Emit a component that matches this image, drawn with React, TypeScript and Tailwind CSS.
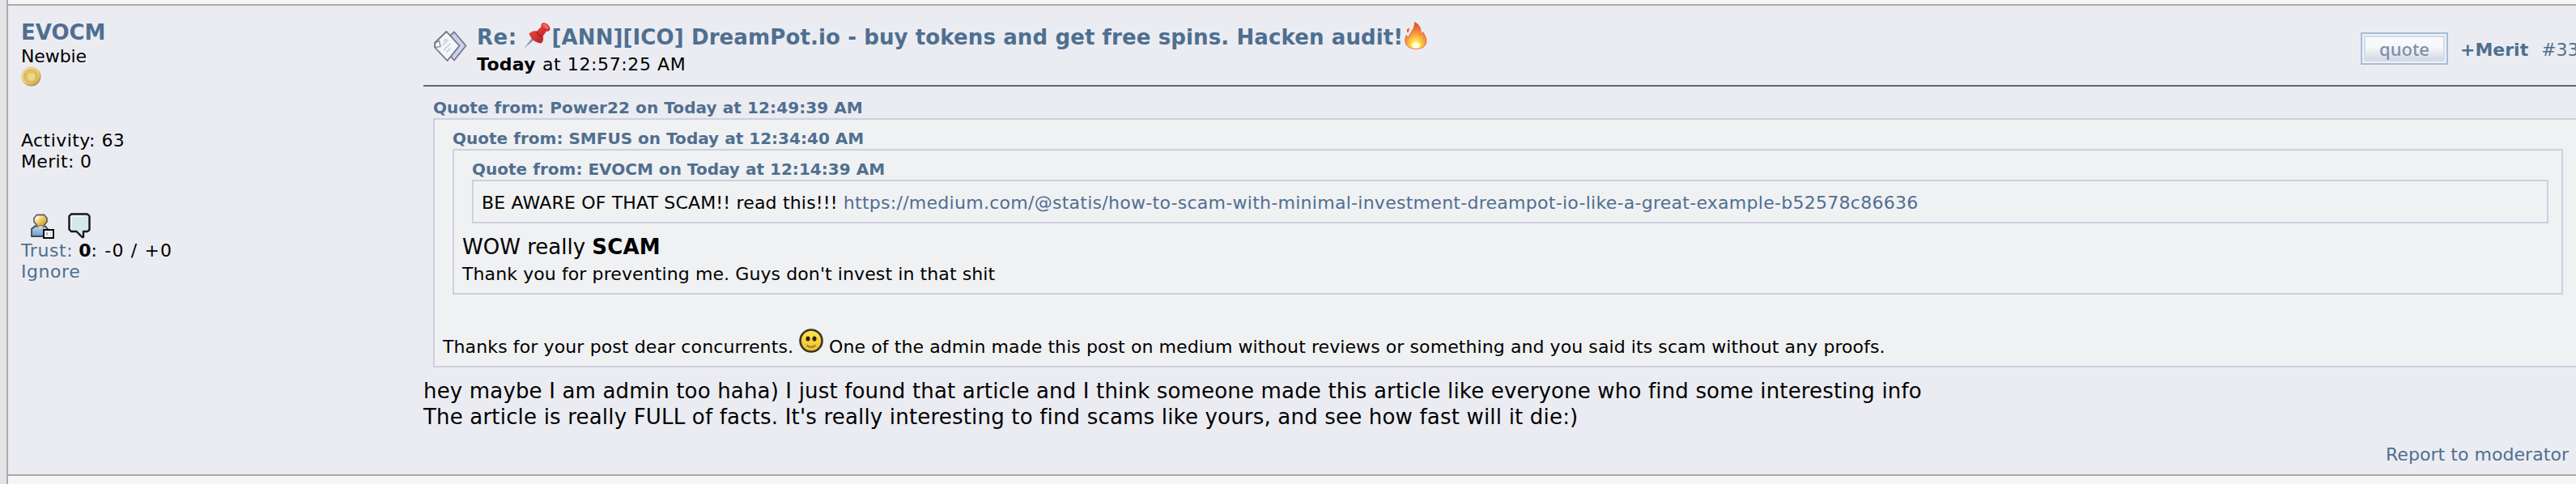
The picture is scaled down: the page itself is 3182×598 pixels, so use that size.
import type { ReactNode } from 'react'

function CoinIcon() {
  return (
    <svg width="25" height="25" viewBox="0 0 25 25" className="-mt-px">
      <defs>
        <radialGradient id="coin" cx="0.4" cy="0.35" r="0.7">
          <stop offset="0" stopColor="#fbeaa4" />
          <stop offset="0.7" stopColor="#e6ca72" />
          <stop offset="1" stopColor="#a5813a" />
        </radialGradient>
      </defs>
      <circle cx="12.5" cy="12.5" r="12" fill="url(#coin)" />
      <circle cx="12" cy="12" r="8" fill="#e2c26a" stroke="#d2ae5a" strokeWidth="1.2" />
      <circle cx="12.5" cy="13" r="4.5" fill="#efd888" />
    </svg>
  )
}

function ProfileIcon() {
  return (
    <svg width="29" height="32" viewBox="0 0 29 32">
      <defs>
        <linearGradient id="face" x1="0" y1="0" x2="1" y2="1">
          <stop offset="0.15" stopColor="#ffffff" />
          <stop offset="0.5" stopColor="#f0c860" />
          <stop offset="1" stopColor="#c08a1c" />
        </linearGradient>
        <linearGradient id="torso" x1="0" y1="0" x2="0" y2="1">
          <stop offset="0" stopColor="#bcd3ec" />
          <stop offset="1" stopColor="#6f9acb" />
        </linearGradient>
      </defs>
      <path d="M1 29V20l4-3.500h13l3 3.500v9z" fill="url(#torso)" stroke="#3d4a5c" strokeWidth="1.8" />
      <path d="M7.500 2.500h9l3.500 4v4.500l-4.500 5.500h-7L4 11V6.500z" fill="url(#face)" stroke="#6b675d" strokeWidth="1.8" />
      <path d="M8 16.500l4 2.500 4-2.500" fill="#f5e6bb" />
      <rect x="16" y="21" width="12" height="10" fill="#fff" stroke="#0a0a0a" strokeWidth="2" />
      <path d="M19 24h2.500v4H19zM24 24h1.500v1.500H24zM24 27h1.500v1.500H24z" fill="#a9bdc8" />
    </svg>
  )
}

function MessageIcon() {
  return (
    <svg width="28" height="32" viewBox="0 0 28 32">
      <path
        d="M4 1.500h20l2.500 2.500v17L24 23h-5v7h-1.500L12 24.500 10.500 23H4L1.500 20.500V4z"
        fill="#d8e6ef"
        stroke="#15181a"
        strokeWidth="2.4"
        strokeLinejoin="round"
      />
      <path d="M4 21V5l1-1h16" fill="none" stroke="#f2f8fc" strokeWidth="1.5" />
    </svg>
  )
}

function PostIcon() {
  return (
    <svg width="41" height="38" viewBox="0 0 41 38">
      <path d="M25 1.500L39.500 18.500 25 36.500 17 27V9z" fill="#c9d1f3" stroke="#777a83" strokeWidth="1.8" strokeLinejoin="round" />
      <path d="M15.500 1L31.500 18.500 16.500 37 1 20.500V15z" fill="#f3f7fb" stroke="#73767c" strokeWidth="1.8" strokeLinejoin="round" />
      <path d="M1.500 15.500l5-3 1.500 7-6 1z" fill="#fff" stroke="#84878d" strokeWidth="1.3" />
      <path d="M12 13l3-3M10.500 18l7-7M12 24l8-8M15.500 26.500l5-5" stroke="#c3c9d3" strokeWidth="1.5" />
    </svg>
  )
}

function PinIcon() {
  return (
    <svg width="33" height="34" viewBox="0 0 33 34" className="mb-1">
      <defs>
        <linearGradient id="pin" x1="0" y1="0" x2="1" y2="1">
          <stop offset="0" stopColor="#f0605a" />
          <stop offset="0.5" stopColor="#d7322f" />
          <stop offset="1" stopColor="#9c1c20" />
        </linearGradient>
      </defs>
      <path d="M0.500 32.500L11.500 18l3 3z" fill="#8b98ab" />
      <path
        d="M6.500 14.500c3-3.500 7-3.500 9.500-3l5.500-5.500c-.5-3 1-5 3.500-5 4 .5 7 4 7.500 7.500 0 2.500-2 3.500-4.500 3l-4.500 6.500c1 3 1 6-2 8.500-6 0-13-5-15-12z"
        fill="url(#pin)"
      />
      <path d="M16 12c.5 2.500 3 5.500 7 6" fill="none" stroke="#9f1e22" strokeWidth="1.3" />
      <ellipse cx="27" cy="5.500" rx="4.500" ry="2.200" transform="rotate(45 27 5.500)" fill="#ef6661" />
    </svg>
  )
}

function FireIcon() {
  return (
    <svg width="28" height="34" viewBox="0 0 28 34" className="mb-1">
      <defs>
        <radialGradient id="fire" cx="0.5" cy="0.88" r="0.85">
          <stop offset="0" stopColor="#fffbd0" />
          <stop offset="0.25" stopColor="#fde047" />
          <stop offset="0.55" stopColor="#f59a3c" />
          <stop offset="1" stopColor="#e5482a" />
        </radialGradient>
      </defs>
      <path
        d="M12.500 0.500C18 3 20.500 8 20 14c0 1.500 1.500 1 2 0l.5-1.500c3 4 5 8.500 4 13.500-1 5-6 7.500-12.500 7.500S2 30.500 1 25c-.7-4 .3-6.500 1.500-8.500.5 1.500 1 2.500 2.500 2.500C6 14 12.500 10 12.500 0.500z"
        fill="url(#fire)"
        stroke="#e4512e"
        strokeWidth="0.8"
      />
      <path d="M3 9.500c1-.5 2-1.500 2.500-2.500.5 2 0 4.500-1.500 6.500-1-1-1.500-2.500-1-4z" fill="#e5532f" />
      <ellipse cx="14" cy="29" rx="5" ry="4" fill="#fffde2" opacity="0.8" />
    </svg>
  )
}

function SmileyIcon() {
  return (
    <svg width="30" height="30" viewBox="0 0 30 30" className="mr-[7px] mb-[6px] ml-[7px]">
      <defs>
        <linearGradient id="smiley" x1="0" y1="0" x2="0" y2="1">
          <stop offset="0" stopColor="#fde64a" />
          <stop offset="1" stopColor="#edbd35" />
        </linearGradient>
      </defs>
      <circle cx="15" cy="15" r="13.5" fill="url(#smiley)" stroke="#3a3420" strokeWidth="2.6" />
      <ellipse cx="11" cy="12.500" rx="2.500" ry="3" fill="#2a2208" />
      <ellipse cx="19" cy="12.500" rx="2.500" ry="3" fill="#2a2208" />
      <path d="M9.500 20.500c3 3 8 3 11 0" fill="none" stroke="#a07c1c" strokeWidth="2" />
    </svg>
  )
}

interface QuoteProps {
  title: string
  wide?: boolean
  children: ReactNode
}

function Quote({ title, wide, children }: QuoteProps) {
  return (
    <div>
      <div
        className={`h-[26px] text-[20px] leading-[26px] font-bold text-[#4f6f90] ${wide ? 'tracking-[0.09px]' : 'tracking-[0.02px]'}`}
      >
        {title}
      </div>
      <div className="border-2 border-[#cfcfe0] bg-[#f0f1f3] px-[10px]">{children}</div>
    </div>
  )
}

export default function App() {
  return (
    <div className="flex h-[598px] w-full overflow-hidden bg-[#e4e4e5] pl-2 font-['DejaVu_Sans',sans-serif] text-[22px] leading-[26px] whitespace-nowrap text-black">
      <div className="flex min-w-0 flex-1 flex-col border-l-2 border-[#aaaaac] bg-[#f6f6f6] pt-[5px]">
        <div className="flex h-[583px] border-y-2 border-[#aaaaac] bg-[#ebecf2]">
          {/* Poster info */}
          <div className="flex w-[513px] shrink-0 flex-col items-start pt-[17px] pl-4">
            <span className="text-[26px] leading-8 font-bold text-[#4f6f90]">EVOCM</span>
            <span className="mt-px tracking-[-0.1px]">Newbie</span>
            <CoinIcon />
            <span className="mt-[54px] tracking-[0.43px]">Activity: 63</span>
            <span className="tracking-[0.33px]">Merit: 0</span>
            <div className="mt-[50px] mb-[2px] flex gap-[17px] pl-3">
              <ProfileIcon />
              <MessageIcon />
            </div>
            <div>
              <span className="tracking-[0.6px] text-[#4f6f90]">Trust:</span> <b>0</b>
              <span className="tracking-[1.15px]">: -0 / +0</span>
            </div>
            <span className="tracking-[0.55px] text-[#4f6f90]">Ignore</span>
          </div>

          {/* Post */}
          <div className="flex w-[2661px] shrink-0 flex-col">
            <div className="flex h-[100px] border-b-2 border-[#646669]">
              <div className="pt-[31px] pl-[13px]">
                <PostIcon />
              </div>
              <div className="pt-[20px] pl-3">
                <div className="flex h-[38px] items-center text-[26px] leading-8 font-bold text-[#4f6f90]">
                  <span className="mr-2 tracking-[0.5px]">Re:</span>
                  <PinIcon />
                  <span className="mr-[2px] ml-[2px] tracking-[0.12px]">
                    [ANN][ICO] DreamPot.io - buy tokens and get free spins. Hacken audit!
                  </span>
                  <FireIcon />
                </div>
                <div className="mt-[2px]">
                  <b className="tracking-[0.3px]">Today</b> <span className="ml-px tracking-[0.6px]">at 12:57:25 AM</span>
                </div>
              </div>
              <div className="ml-auto flex w-[268px] items-start pt-[33px]">
                <button className="h-10 w-[108px] shrink-0 border-2 border-[#a7bcd8] bg-[#eef2f9] p-[2px]">
                  <span className="flex h-full items-center justify-center border-2 border-[#d5dce8] bg-linear-to-b from-[#f8f9fb] from-40% to-[#d3dae2] font-['Noto_Sans',sans-serif] text-[22px] font-medium text-[#7b90ae]">
                    quote
                  </span>
                </button>
                <span className="mt-[9px] ml-[15px] font-bold text-[#4f6f90]">+Merit</span>
                <span className="mt-[9px] ml-4 text-[#4f6f90]">#33</span>
              </div>
            </div>

            <div className="pt-[13px] pl-3">
              <Quote title="Quote from: Power22 on Today at 12:49:39 AM" wide>
                <div className="pt-[10px] pr-[6px] pl-3">
                  <Quote title="Quote from: SMFUS on Today at 12:34:40 AM">
                    <div className="pt-[10px] pr-[6px] pl-3">
                      <Quote title="Quote from: EVOCM on Today at 12:14:39 AM">
                        <div className="pt-[14px] pb-[10px]">
                          <span className="tracking-[0.175px]">BE AWARE OF THAT SCAM!! read this!!!</span>{' '}
                          <span className="tracking-[0.275px] text-[#4f6f90]">
                            https://medium.com/@statis/how-to-scam-with-minimal-investment-dreampot-io-like-a-great-example-b52578c86636
                          </span>
                        </div>
                      </Quote>
                    </div>
                    <div className="mt-[13px] text-[26px] leading-8">
                      WOW really <b className="tracking-[0.2px]">SCAM</b>
                    </div>
                    <div className="mt-[5px] pb-[10px] tracking-[0.1px]">
                      Thank you for preventing me. Guys don't invest in that shit
                    </div>
                  </Quote>
                </div>
                <div className="flex h-[88px] items-end pb-[10px]">
                  <span className="tracking-[0.12px]">Thanks for your post dear concurrents.</span>
                  <SmileyIcon />
                  <span className="tracking-[0.085px]">
                    One of the admin made this post on medium without reviews or something and you said its scam without any proofs.
                  </span>
                </div>
              </Quote>
            </div>

            <div className="mt-[13px] text-[26px] leading-8">
              <div className="tracking-[0.166px]">
                hey maybe I am admin too haha) I just found that article and I think someone made this article like everyone who find some interesting info
              </div>
              <div className="tracking-[0.185px]">
                The article is really FULL of facts. It's really interesting to find scams like yours, and see how fast will it die:)
              </div>
            </div>
            <div className="mt-[18px] pr-[11px] text-right tracking-[0.05px] text-[#4f6f90]">Report to moderator</div>
          </div>
        </div>
      </div>
    </div>
  )
}
